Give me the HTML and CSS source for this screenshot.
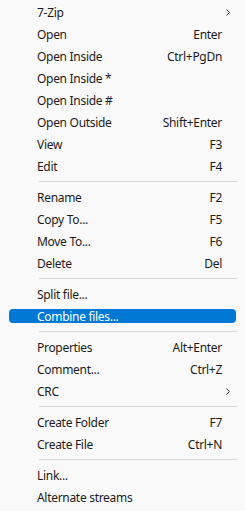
FILE: index.html
```html
<!DOCTYPE html>
<html lang="en">
<head>
    <meta charset="UTF-8">
    <meta name="viewport" content="width=device-width, initial-scale=1.0">
    <title>Context menu</title>
    <link rel="stylesheet" href="styles.css">
</head>
<body>
    <div class="menu">
        <div class="item"><div class="cell"><span>7-Zip</span><svg class="arrow" width="4" height="7" viewBox="0 0 4 7"><path d="M0.5 0.5 L3.5 3.5 L0.5 6.5" fill="none" stroke="#333" stroke-width="1"/></svg></div></div>
        <div class="item"><div class="cell"><span>Open</span><span>Enter</span></div></div>
        <div class="item"><div class="cell"><span>Open Inside</span><span>Ctrl+PgDn</span></div></div>
        <div class="item"><div class="cell"><span>Open Inside *</span></div></div>
        <div class="item"><div class="cell"><span>Open Inside #</span></div></div>
        <div class="item"><div class="cell"><span>Open Outside</span><span>Shift+Enter</span></div></div>
        <div class="item"><div class="cell"><span>View</span><span>F3</span></div></div>
        <div class="item"><div class="cell"><span>Edit</span><span>F4</span></div></div>
        <div class="sep"></div>
        <div class="item"><div class="cell"><span>Rename</span><span>F2</span></div></div>
        <div class="item"><div class="cell"><span>Copy To...</span><span>F5</span></div></div>
        <div class="item"><div class="cell"><span>Move To...</span><span>F6</span></div></div>
        <div class="item"><div class="cell"><span>Delete</span><span>Del</span></div></div>
        <div class="sep"></div>
        <div class="item"><div class="cell"><span>Split file...</span></div></div>
        <div class="item active"><div class="cell"><span>Combine files...</span></div></div>
        <div class="sep"></div>
        <div class="item"><div class="cell"><span>Properties</span><span>Alt+Enter</span></div></div>
        <div class="item"><div class="cell"><span>Comment...</span><span>Ctrl+Z</span></div></div>
        <div class="item"><div class="cell"><span>CRC</span><svg class="arrow" width="4" height="7" viewBox="0 0 4 7"><path d="M0.5 0.5 L3.5 3.5 L0.5 6.5" fill="none" stroke="#333" stroke-width="1"/></svg></div></div>
        <div class="sep"></div>
        <div class="item"><div class="cell"><span>Create Folder</span><span>F7</span></div></div>
        <div class="item"><div class="cell"><span>Create File</span><span>Ctrl+N</span></div></div>
        <div class="sep"></div>
        <div class="item"><div class="cell"><span>Link...</span></div></div>
        <div class="item"><div class="cell"><span>Alternate streams</span></div></div>
    </div>
</body>
</html>
```

FILE: styles.css
```css
html, body {
    margin: 0;
    padding: 0;
    background: #f9f9f9;
}

body {
    font-family: "Noto Sans", "Open Sans", sans-serif;
    font-size: 12px;
    letter-spacing: -0.3px;
    color: #1b1b1b;
}

.menu {
    width: 245px;
    height: 511px;
    padding-top: 1px;
    box-sizing: border-box;
}

.item {
    height: 22px;
    box-sizing: border-box;
    padding: 4px 9px;
}

.cell {
    height: 14px;
    display: flex;
    align-items: center;
    justify-content: space-between;
    padding: 0 14px 0 28px;
    border-radius: 4px;
    line-height: 14px;
    white-space: nowrap;
}

.cell span {
    margin-top: 2px;
}

.active .cell {
    background: #0078d4;
    color: #fff;
}

.arrow {
    margin-right: -8px;
    margin-top: 1px;
}

.sep {
    height: 9px;
    box-sizing: border-box;
    padding-top: 4px;
    margin: 0 8px 0 39px;
}

.sep::after {
    content: "";
    display: block;
    height: 1px;
    background: #d9d9d9;
}
```
